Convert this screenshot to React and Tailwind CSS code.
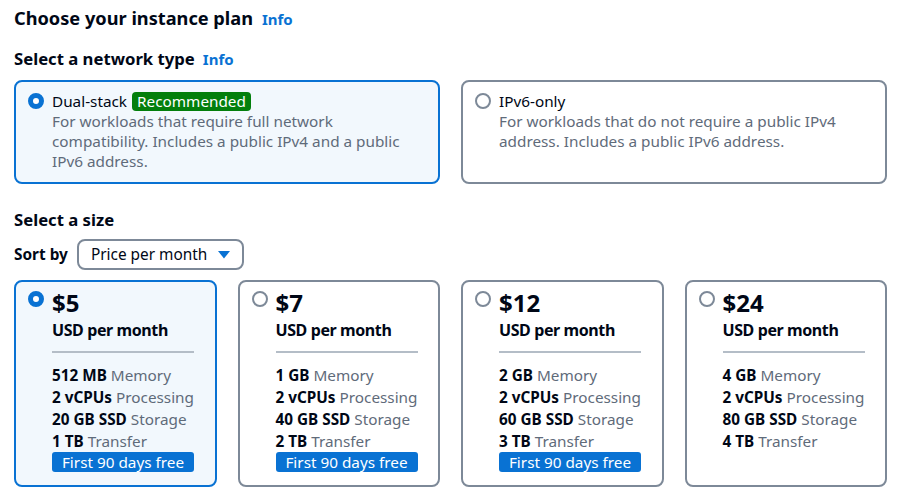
import React, { useState } from 'react';

const networkTypes = [
    {
        id: 'dual',
        label: 'Dual-stack',
        badge: 'Recommended',
        description: 'For workloads that require full network compatibility. Includes a public IPv4 and a public IPv6 address.',
    },
    {
        id: 'ipv6',
        label: 'IPv6-only',
        description: 'For workloads that do not require a public IPv4 address. Includes a public IPv6 address.',
    },
];

const plans = [
    { id: 'p5', price: '$5', memory: '512 MB', cpu: '2 vCPUs', storage: '20 GB SSD', transfer: '1 TB', free: true },
    { id: 'p7', price: '$7', memory: '1 GB', cpu: '2 vCPUs', storage: '40 GB SSD', transfer: '2 TB', free: true },
    { id: 'p12', price: '$12', memory: '2 GB', cpu: '2 vCPUs', storage: '60 GB SSD', transfer: '3 TB', free: true },
    { id: 'p24', price: '$24', memory: '4 GB', cpu: '2 vCPUs', storage: '80 GB SSD', transfer: '4 TB', free: false },
];

const Radio = ({ checked }) => (
    checked ? (
        <span className="block w-4 h-4 rounded-full border-[5px] border-[#0972d3] bg-white" />
    ) : (
        <span className="block w-4 h-4 rounded-full border-2 border-[#7d8998] bg-white" />
    )
);

const Card = ({ selected, onClick, className = '', children }) => (
    <div
        onClick={onClick}
        className={`rounded-lg border-2 cursor-pointer ${selected ? 'border-[#0972d3] bg-[#f2f8fd]' : 'border-[#7d8998] bg-white'} ${className}`}
    >
        {children}
    </div>
);

export default function App() {
    const [network, setNetwork] = useState('dual');
    const [plan, setPlan] = useState('p5');

    return (
        <div className="w-[901px] h-[495px] bg-white px-[14px] text-[#000716] font-['Noto_Sans',sans-serif]">
            {/* Header */}
            <div className="flex items-baseline gap-[9px] h-[36px] pt-[4px]">
                <h2 className="text-[18.2px] leading-[28px] font-bold">Choose your instance plan</h2>
                <a className="text-[15px] font-bold text-[#0972d3]">Info</a>
            </div>

            {/* Network type */}
            <div className="flex items-baseline gap-[8px] h-[26px] mt-[10px]">
                <h3 className="text-[16.7px] leading-[26px] font-bold">Select a network type</h3>
                <a className="text-[15px] font-bold text-[#0972d3]">Info</a>
            </div>
            <div className="grid grid-cols-2 gap-[21px] mt-[8px]">
                {networkTypes.map(n => (
                    <Card key={n.id} selected={network === n.id} onClick={() => setNetwork(n.id)} className="h-[104px] pl-[12px] pr-[16px] pt-[9px]">
                        <div className="flex gap-[8px]">
                            <div className="pt-[2px] shrink-0"><Radio checked={network === n.id} /></div>
                            <div className="text-[15.3px] leading-[20px]">
                                <div className="flex items-center gap-[5px]">
                                    <span>{n.label}</span>
                                    {n.badge && (
                                        <span className="bg-[#037f0c] text-white rounded-[4px] px-[5px] leading-[19px]">{n.badge}</span>
                                    )}
                                </div>
                                <div className="text-[#5f6b7a]">{n.description}</div>
                            </div>
                        </div>
                    </Card>
                ))}
            </div>

            {/* Size */}
            <h3 className="text-[16.7px] leading-[26px] font-bold mt-[23px]">Select a size</h3>
            <div className="flex items-center gap-[9px] mt-[6px]">
                <span className="text-[15.4px] font-bold">Sort by</span>
                <button className="h-[31px] w-[167px] border-2 border-[#7d8998] rounded-lg flex items-center justify-between pl-[12px] pr-[12px] text-[15.4px]">
                    <span>Price per month</span>
                    <svg width="12" height="8" viewBox="0 0 12 8"><path d="M0 0h12L6 7.5z" fill="#0972d3" /></svg>
                </button>
            </div>
            <div className="grid grid-cols-4 gap-[21px] mt-[10px]">
                {plans.map(p => (
                    <Card key={p.id} selected={plan === p.id} onClick={() => setPlan(p.id)} className="h-[207px] pl-[12px] pt-[6px]">
                        <div className="flex gap-[8px]">
                            <div className="pt-[3px] shrink-0"><Radio checked={plan === p.id} /></div>
                            <div className="w-[142px]">
                                <div className="text-[24px] font-bold leading-[30px]">{p.price}</div>
                                <div className="text-[16px] tracking-[-0.4px] font-bold leading-[22px] mt-[1px]">USD per month</div>
                                <div className="h-[2px] bg-[#b4bdc7] mt-[10px] mb-[11px]" />
                                <div className="text-[15.3px] leading-[22px] whitespace-nowrap">
                                    <div><span className="font-bold">{p.memory}</span> <span className="text-[#5f6b7a]">Memory</span></div>
                                    <div><span className="font-bold">{p.cpu}</span> <span className="text-[#5f6b7a]">Processing</span></div>
                                    <div><span className="font-bold">{p.storage}</span> <span className="text-[#5f6b7a]">Storage</span></div>
                                    <div><span className="font-bold">{p.transfer}</span> <span className="text-[#5f6b7a]">Transfer</span></div>
                                </div>
                                {p.free && (
                                    <div className="bg-[#0972d3] text-white rounded-[3px] text-[15.3px] leading-[20px] text-center">First 90 days free</div>
                                )}
                            </div>
                        </div>
                    </Card>
                ))}
            </div>
        </div>
    );
}
